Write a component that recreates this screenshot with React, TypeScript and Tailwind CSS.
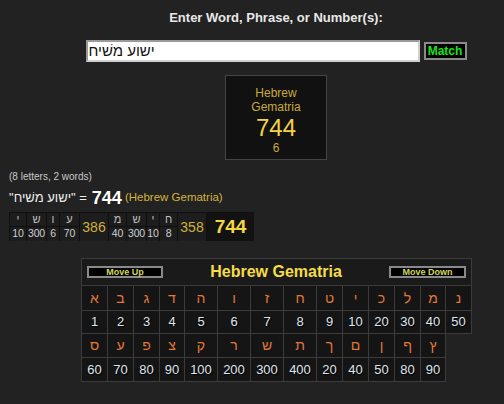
import React from "react";

const letters1 = ["א", "ב", "ג", "ד", "ה", "ו", "ז", "ח", "ט", "י", "כ", "ל", "מ", "נ"];
const nums1 = [1, 2, 3, 4, 5, 6, 7, 8, 9, 10, 20, 30, 40, 50];
const letters2 = ["ס", "ע", "פ", "צ", "ק", "ר", "ש", "ת", "ך", "ם", "ן", "ף", "ץ"];
const nums2 = [60, 70, 80, 90, 100, 200, 300, 400, 20, 40, 50, 80, 90];
const widths = [
  "w-[27px] border-l",
  "w-[26px]",
  "w-[26px]",
  "w-[25px]",
  "w-[33px]",
  "w-[33px]",
  "w-[33px]",
  "w-[33px]",
  "w-[26px]",
  "w-[26px]",
  "w-[26px]",
  "w-[26px]",
  "w-[25px]",
  "w-[26px]",
];

function Row({ items, kind, h }: { items: (string | number)[]; kind: "l" | "n"; h: string }) {
  return (
    <div className={`flex ${h}`}>
      {items.map((it, i) => (
        <div
          key={i}
          className={`${widths[i]} border-r border-b border-[#3b3b3b] bg-[#151515] flex items-center justify-center ${
            kind === "l"
              ? "text-[14px] text-[#e0783a]"
              : "text-[13px] text-[#dfe6ee] [text-shadow:1px_1px_1px_#000]"
          }`}
        >
          {it}
        </div>
      ))}
    </div>
  );
}

const word1 = [
  ["י", "10", "w-[17px]"],
  ["ש", "300", "w-[20px]"],
  ["ו", "6", "w-[13px]"],
  ["ע", "70", "w-[20px]"],
];
const word2 = [
  ["מ", "40", "w-[18px]"],
  ["ש", "300", "w-[20px]"],
  ["י", "10", "w-[13px]"],
  ["ח", "8", "w-[18px]"],
];

function Word({ letters }: { letters: string[][] }) {
  return (
    <>
      {letters.map(([l, v, w], i) => (
        <div key={i} className={`${w} flex flex-col`}>
          <div className="h-[14px] flex items-center justify-center border-r border-b border-[#0f0f0f] bg-[#1d1d1d] text-[11px] text-[#bdbdbd]">
            {l}
          </div>
          <div className="h-[14px] flex items-center justify-center border-r border-[#0f0f0f] bg-[#1d1d1d] text-[10.5px] tracking-[-0.2px] text-[#cfcfcf]">
            {v}
          </div>
        </div>
      ))}
    </>
  );
}

export default function App() {
  return (
    <div
      className="min-h-screen w-full bg-[#222222] text-white"
      style={{ fontFamily: '"Liberation Sans", Arial, "DejaVu Sans", sans-serif' }}
    >
      <div className="pl-[48px] flex flex-col items-center pt-[10px]">
        <div className="text-[13px] leading-[16px] font-bold text-[#e8e8e8]">
          Enter Word, Phrase, or Number(s):
        </div>
        <div className="mt-[14px] flex items-center gap-[4px]">
          <input
            readOnly
            value="ישוע משׁיח"
            className="w-[334px] h-[22px] bg-white text-[#111] text-[15px] px-[1px] border-2 border-t-[#9a9a9a] border-l-[#9a9a9a] border-r-[#d0d0d0] border-b-[#d0d0d0] outline-none"
          />
          <div className="w-[43px] h-[18px] bg-black border-2 border-[#8a8a8a] flex items-center justify-center text-[12px] leading-none font-bold text-[#1fe01f]">
            Match
          </div>
        </div>
        <div className="mt-[13px] w-[102px] h-[85px] bg-[#111111] border border-[#444444] flex flex-col items-center pt-[10px]">
          <div className="text-[12px] leading-[14px] text-[#c9a93a] text-center">
            Hebrew
            <br />
            Gematria
          </div>
          <div className="text-[24px] leading-[26px] text-[#f2d24a] mt-[1px]">744</div>
          <div className="text-[12px] leading-[14px] text-[#c9a93a]">6</div>
        </div>
      </div>

      <div className="pl-[9px] mt-[11px]">
        <div className="text-[10px] leading-[12px] text-[#c8c8c8]">(8 letters, 2 words)</div>
        <div className="mt-[5px] h-[20px] flex items-center">
          <span className="text-[13px] text-[#eeeeee]">"ישוע משׁיח" =</span>
          <span className="ml-[5px] text-[18px] font-bold text-white">744</span>
          <span className="ml-[3px] text-[11.5px] text-[#d4b33c]">(Hebrew Gematria)</span>
        </div>
        <div className="mt-[4px] flex w-fit h-[29px] border-t border-l border-[#0f0f0f]">
          <Word letters={word1} />
          <div className="w-[29px] flex items-center justify-center bg-[#1d1d1d] border-r border-[#0f0f0f] text-[14px] text-[#cfb040]">
            386
          </div>
          <Word letters={word2} />
          <div className="w-[29px] flex items-center justify-center bg-[#1d1d1d] border-r border-[#0f0f0f] text-[14px] text-[#cfb040]">
            358
          </div>
          <div className="w-[47px] flex items-center justify-center bg-[#121212] text-[19px] font-bold text-[#f5d742]">
            744
          </div>
        </div>
      </div>

      <div className="pl-[81px] mt-[17px]">
        <div className="w-[391px] h-[28px] border border-[#3b3b3b] bg-[#1a1a1a] flex items-center justify-between px-[5px]">
          <div className="w-[76px] h-[12px] bg-black border-2 border-[#8a8a8a] flex items-center justify-center text-[9px] leading-none font-bold text-[#cfd65a]">
            Move Up
          </div>
          <div className="text-[16px] font-bold text-[#f5dc4a]">Hebrew Gematria</div>
          <div className="w-[77px] h-[12px] bg-black border-2 border-[#8a8a8a] flex items-center justify-center text-[9px] leading-none font-bold text-[#cfd65a]">
            Move Down
          </div>
        </div>
        <Row items={letters1} kind="l" h="h-[25px]" />
        <Row items={nums1} kind="n" h="h-[23px]" />
        <Row items={letters2} kind="l" h="h-[24px]" />
        <Row items={nums2} kind="n" h="h-[24px]" />
      </div>
    </div>
  );
}
